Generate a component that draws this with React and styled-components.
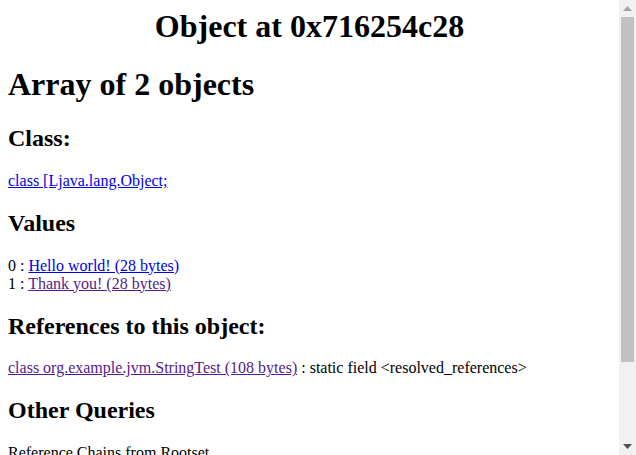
import styled, { createGlobalStyle } from "styled-components";

const GlobalStyle = createGlobalStyle`
  html, body {
    background: #ffffff;
  }
  body {
    margin: 0;
    overflow: hidden;
  }
`;

const Window = styled.div`
  display: flex;
  height: 100vh;
  overflow: hidden;
`;

const Viewport = styled.div`
  flex: 1;
  min-width: 0;
  overflow: hidden;
  padding: 8px;
  font-family: "Liberation Serif", "Times New Roman", serif;
  font-size: 16px;
  color: #000000;
`;

const Scrollbar = styled.div`
  width: 17px;
  flex: none;
  display: flex;
  flex-direction: column;
  background: #f1f1f1;
`;

const ScrollButton = styled.div`
  height: 17px;
  display: flex;
  align-items: center;
  justify-content: center;
`;

const Track = styled.div`
  flex: 1;
  padding: 0 2px;
`;

const Thumb = styled.div`
  background: #c1c1c1;
`;

const Title = styled.h1`
  font-size: 32px;
  font-weight: bold;
  margin: ${({ $first }) => ($first ? "0 0 21.44px" : "21.44px 0")};
  text-align: ${({ $center }) => ($center ? "center" : "left")};
`;

const Section = styled.h2`
  font-size: 24px;
  font-weight: bold;
  margin: 19.92px 0;
`;

const Link = styled.a`
  color: ${({ $visited }) => ($visited ? "#551a8b" : "#0000ee")};
  text-decoration: underline;
  cursor: pointer;
`;

const Lines = styled.div`
  line-height: normal;
`;

const Refs = styled.ul`
  margin: 16px 0;
  padding-left: 40px;
`;

const values = [
  { index: 0, label: "Hello world! (28 bytes)", visited: false },
  { index: 1, label: "Thank you! (28 bytes)", visited: true },
];

const Arrow = ({ up, color }) => (
  <svg width="9" height="5" viewBox="0 0 9 5">
    <polygon points={up ? "0,5 9,5 4.5,0" : "0,0 9,0 4.5,5"} fill={color} />
  </svg>
);

export default function App() {
  // thumb length follows visible / total height of the page (455 / 555)
  const thumbHeight = Math.round((455 / 555) * 421);

  return (
    <Window>
      <GlobalStyle />
      <Viewport>
        <Title $first $center>Object at 0x716254c28</Title>
        <Title>Array of 2 objects</Title>

        <Section>Class:</Section>
        <Link href="#class">class [Ljava.lang.Object;</Link>
        <br />

        <Section>Values</Section>
        <Lines>
          {values.map(({ index, label, visited }) => (
            <div key={index}>
              {index} : <Link href={`#v${index}`} $visited={visited}>{label}</Link>
            </div>
          ))}
        </Lines>

        <Section>References to this object:</Section>
        <Link href="#ref" $visited>class org.example.jvm.StringTest (108 bytes)</Link>
        {" : static field <resolved_references>"}
        <br />

        <Section>Other Queries</Section>
        Reference Chains from Rootset
        <Refs>
          <li>
            <Link href="#weak">Exclude weak refs</Link>
          </li>
          <li>
            <Link href="#all">Include weak refs</Link>
          </li>
        </Refs>
        <Link href="#reach">Objects reachable from here</Link>
        <br />
      </Viewport>
      <Scrollbar>
        <ScrollButton>
          <Arrow up color="#a3a3a3" />
        </ScrollButton>
        <Track>
          <Thumb style={{ height: thumbHeight }} />
        </Track>
        <ScrollButton>
          <Arrow color="#505050" />
        </ScrollButton>
      </Scrollbar>
    </Window>
  );
}
